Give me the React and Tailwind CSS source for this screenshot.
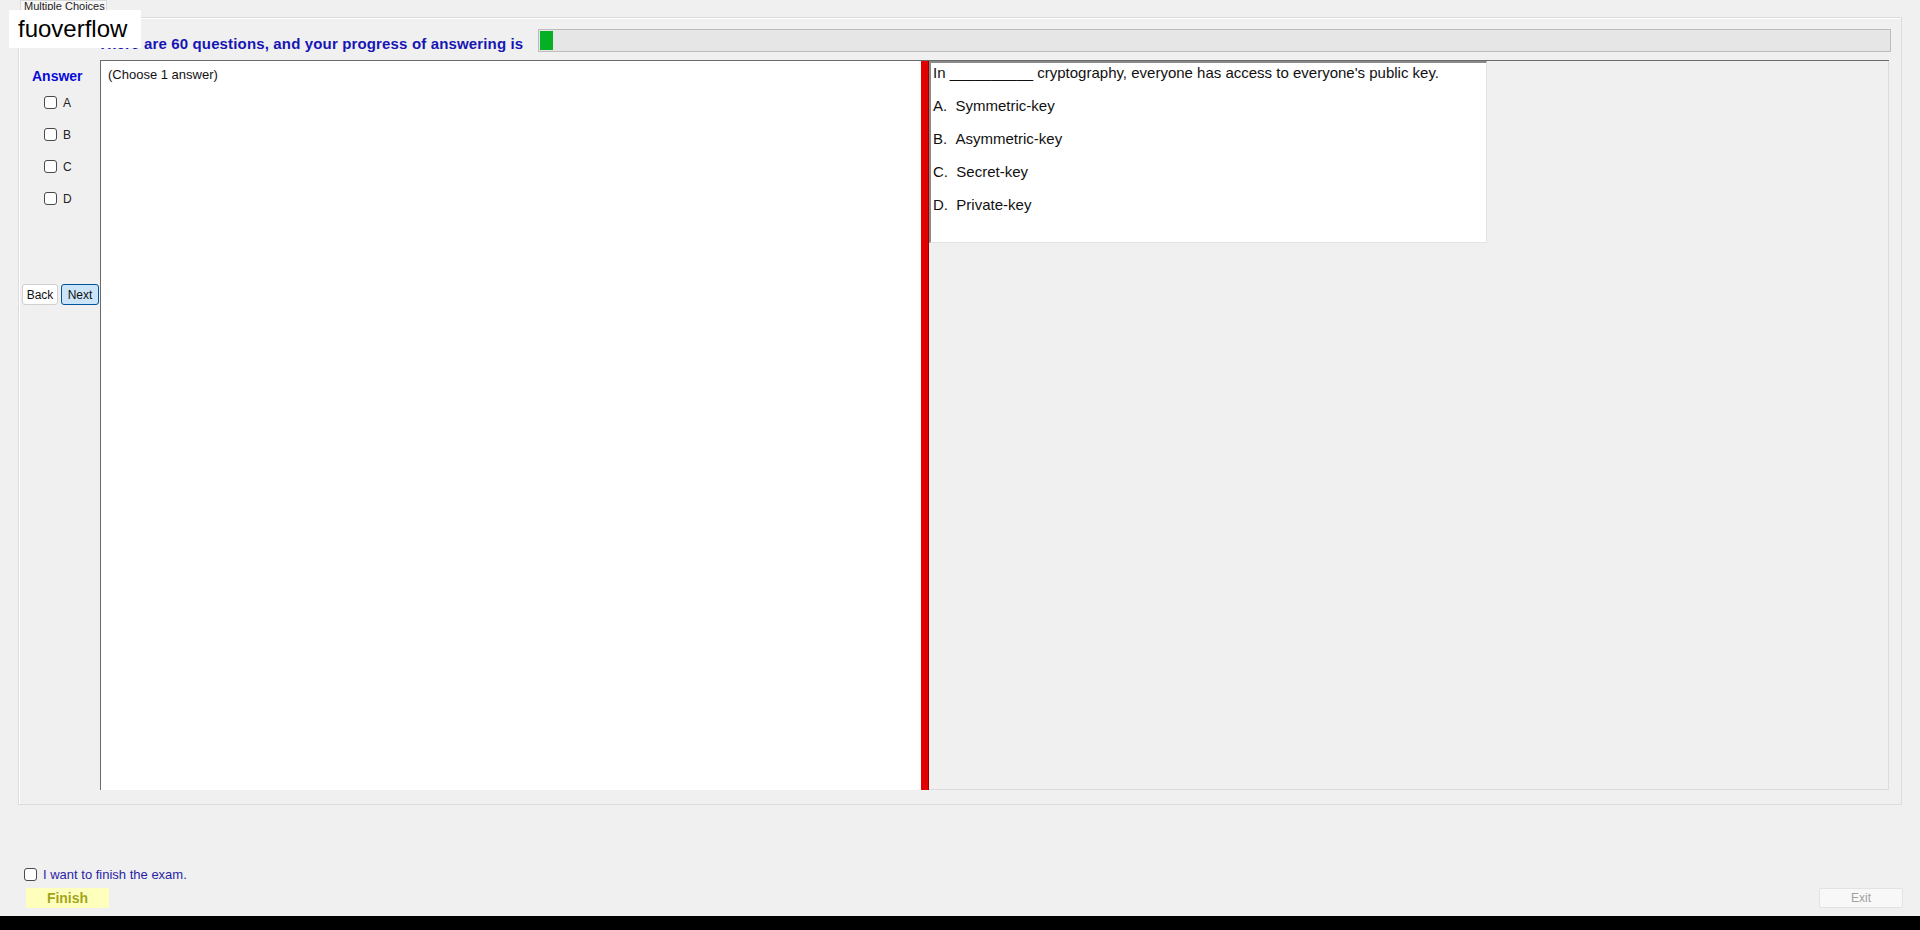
import React from 'react';

const options = [
  { key: 'A', text: 'Symmetric-key' },
  { key: 'B', text: 'Asymmetric-key' },
  { key: 'C', text: 'Secret-key' },
  { key: 'D', text: 'Private-key' },
];

const Box = () => (
  <span className="inline-block w-[13px] h-[13px] border border-[#4a4a4a] rounded-[3px] bg-white shrink-0" />
);

const App = () => {
  return (
    <div
      className="relative w-[1920px] h-[930px] overflow-hidden bg-[#f0f0f0] flex flex-col"
      style={{ fontFamily: '"Liberation Sans", Arial, sans-serif' }}
    >
      {/* watermark label */}
      <div className="absolute left-[9px] top-[10px] w-[132px] h-[38px] bg-white pl-[9px] flex items-center text-[24px] text-black z-10">
        fuoverflow
      </div>

      {/* tab strip */}
      <div className="h-[17px] pl-[20px] flex">
        <div className="w-[87px] h-[17px] bg-[#f7f7f7] border border-b-0 border-[#d9d9d9] text-[11px] leading-[11px] text-[#222] pl-[3px] overflow-hidden">
          Multiple Choices
        </div>
      </div>

      {/* tab page */}
      <div className="ml-[18px] w-[1884px] h-[788px] border border-[#dcdcdc] shadow-[inset_1px_1px_0_#fff] flex flex-col">
        {/* progress header */}
        <div className="mt-[11px] h-[23px] pl-[79px] pr-[10px] flex items-center gap-[15px]">
          <span className="pt-[8px] text-[15px] font-bold tracking-[0.15px] text-[#1616b4] whitespace-nowrap">
            There are 60 questions, and your progress of answering is
          </span>
          <div className="flex-1 h-[23px] bg-[#e6e6e6] border border-[#bcbcbc] p-[1px]">
            <div className="w-[13px] h-full bg-[#06b025]" />
          </div>
        </div>

        {/* body */}
        <div className="mt-[8px] h-[730px] flex">
          {/* answer column */}
          <div className="w-[81px] flex flex-col">
            <div className="mt-[8px] pl-[13px] text-[14px] font-bold text-[#0a0ad8] leading-[16px]">Answer</div>
            <div className="mt-[12px] pl-[25px] flex flex-col gap-[19px]">
              {options.map((o) => (
                <div key={o.key} className="flex items-center gap-[6px] h-[13px]">
                  <Box />
                  <span className="text-[12px] text-[#222]">{o.key}</span>
                </div>
              ))}
            </div>
            <div className="mt-[79px] pl-[3px] flex gap-[3px]">
              <button className="w-[36px] h-[21px] bg-white border border-[#d0d0d0] rounded-[3px] text-[12px] text-[#111]">
                Back
              </button>
              <button className="w-[38px] h-[21px] bg-[#cce4f7] border border-[#005499] rounded-[3px] text-[12px] text-[#111]">
                Next
              </button>
            </div>
          </div>

          {/* split panel */}
          <div className="flex-1 mr-[12px] flex border-t border-[#6b6b6b]">
            <div className="w-[821px] bg-white border-l border-[#6b6b6b] pl-[7px] pt-[6px]">
              <div className="text-[13px] text-[#111] leading-[16px]">(Choose 1 answer)</div>
            </div>
            <div className="w-[8px] bg-[#e30000] border-r border-[#9a0000]" />
            <div className="flex-1 bg-[#f0f0f0] border-r border-b border-[#dcdcdc]">
              <div className="w-[558px] h-[182px] bg-white border-t-2 border-l-2 border-[#8a8a8a] border-r border-b border-r-[#e3e3e3] border-b-[#e3e3e3] pl-[2px] flex flex-col gap-[11px] text-[15px] text-[#111] leading-[22px]">
                <div className="-mt-[1px]">In __________ cryptography, everyone has access to everyone's public key.</div>
                {options.map((o) => (
                  <div key={o.key}>
                    {o.key}.&nbsp;&nbsp;{o.text}
                  </div>
                ))}
              </div>
            </div>
          </div>
        </div>
      </div>

      {/* finish controls */}
      <div className="mt-[63px] h-[13px] pl-[24px] flex items-center gap-[6px]">
        <Box />
        <span className="text-[13px] text-[#2a1ea6]">I want to finish the exam.</span>
      </div>
      <div className="mt-[7px] h-[20px] pl-[26px] pr-[17px] flex justify-between">
        <button className="w-[83px] h-[20px] bg-[#ffffbd] text-[14px] font-bold text-[#a3a31c] leading-[20px]">
          Finish
        </button>
        <button className="w-[84px] h-[20px] bg-[#f8f8f8] border border-[#e2e2e2] rounded-[2px] text-[12px] text-[#a0a0a0] leading-[18px]">
          Exit
        </button>
      </div>
      <div className="mt-[8px] h-[14px] bg-black" />
    </div>
  );
};

export default App;
